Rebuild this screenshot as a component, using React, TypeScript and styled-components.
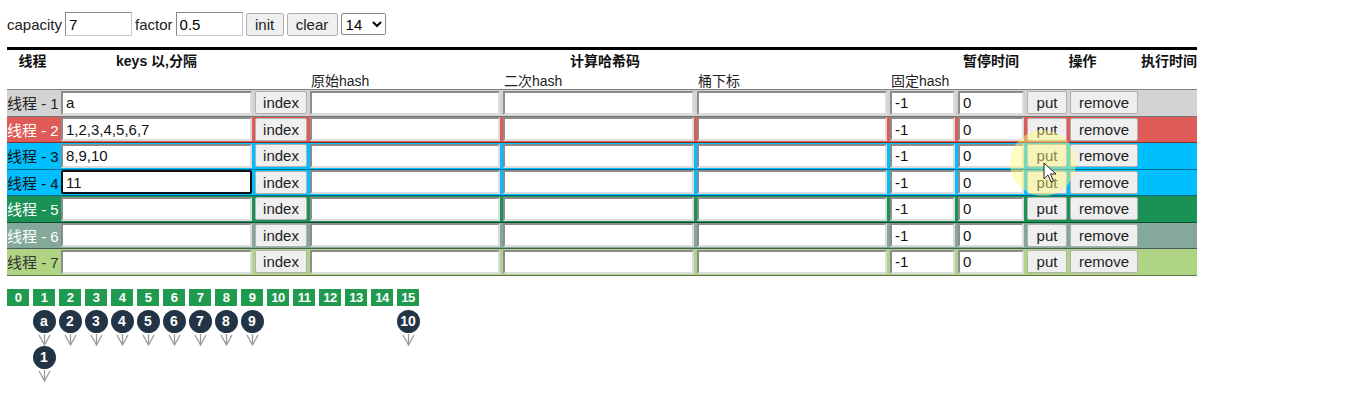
import React from "react"
import styled, { createGlobalStyle } from 'styled-components';

const GlobalStyle = createGlobalStyle`
  body {
    margin: 0;
    background: #fff;
    font-family: "Liberation Sans", Arial, "Noto Sans CJK SC", sans-serif;
    color: #111;
  }
`;

const threads = [
  { n: 1, color: '#d3d3d3', fg: '#222', keys: 'a' },
  { n: 2, color: '#de5b57', fg: '#fff', keys: '1,2,3,4,5,6,7' },
  { n: 3, color: '#00bfff', fg: '#111', keys: '8,9,10' },
  { n: 4, color: '#00bfff', fg: '#111', keys: '11', focused: true },
  { n: 5, color: '#1b9255', fg: '#fff', keys: '' },
  { n: 6, color: '#84a99b', fg: '#fff', keys: '' },
  { n: 7, color: '#afd584', fg: '#333', keys: '' },
];

const chains: Record<number, string[]> = {
  1: ['a', '1'], 2: ['2'], 3: ['3'], 4: ['4'], 5: ['5'],
  6: ['6'], 7: ['7'], 8: ['8'], 9: ['9'], 15: ['10'],
};

export default function App() {
  return (
    <Page>
      <GlobalStyle />
      <Toolbar>
        <span>capacity</span>
        <TextInput defaultValue="7" $w={67} />
        <span>factor</span>
        <TextInput defaultValue="0.5" $w={67} />
        <Button $w={38}>init</Button>
        <Button $w={51}>clear</Button>
        <Select defaultValue="14">
          <option>14</option>
        </Select>
      </Toolbar>

      <Table>
        <HeadRow>
          <HeadCell>线程</HeadCell>
          <HeadCell>keys 以,分隔</HeadCell>
          <HeadCell $span="3 / 8">计算哈希码</HeadCell>
          <HeadCell>暂停时间</HeadCell>
          <HeadCell $span="9 / 11">操作</HeadCell>
          <HeadCell>执行时间</HeadCell>
        </HeadRow>
        <SubHeadRow>
          <SubHead $col={4}>原始hash</SubHead>
          <SubHead $col={5}>二次hash</SubHead>
          <SubHead $col={6}>桶下标</SubHead>
          <SubHead $col={7}>固定hash</SubHead>
        </SubHeadRow>
        <Body>
          {threads.map(t => (
            <Row key={t.n} $bg={t.color}>
              <Label $fg={t.fg}>线程 - {t.n}</Label>
              <CellInput defaultValue={t.keys} $focused={t.focused} />
              <Button>index</Button>
              <CellInput readOnly />
              <CellInput readOnly />
              <CellInput readOnly />
              <CellInput defaultValue="-1" />
              <CellInput defaultValue="0" />
              <Button>put</Button>
              <Button>remove</Button>
              <span />
            </Row>
          ))}
        </Body>
      </Table>

      <Buckets>
        {Array.from({ length: 16 }, (_, i) => (
          <BucketColumn key={i}>
            <BucketBox>{i}</BucketBox>
            {(chains[i] || []).map((v, j) => (
              <Node key={j}>
                <Circle>{v}</Circle>
                <svg width="13" height="12" viewBox="0 0 13 12">
                  <path d="M1 1 L6.5 11 L12 1 M6.5 0 L6.5 11" fill="none" stroke="#9a9a9a" strokeWidth="1.3" />
                </svg>
              </Node>
            ))}
          </BucketColumn>
        ))}
      </Buckets>

      <Highlight />
      <Cursor width="14" height="22" viewBox="0 0 14 22">
        <path d="M1 1 L1 17 L5 13 L8 20 L10.5 19 L7.5 12 L13 12 Z" fill="#fff" stroke="#222" strokeWidth="1" />
      </Cursor>
    </Page>
  );
}

const Page = styled.div`
  position: relative;
  padding: 12px 7px;
  width: 1190px;
  font-size: 15px;
`;

const Toolbar = styled.div`
  display: flex;
  align-items: center;
  gap: 3px;
  height: 24px;
  font-size: 15px;
  color: #222;
`;

const TextInput = styled.input<{ $w: number }>`
  box-sizing: border-box;
  width: ${p => p.$w}px;
  height: 24px;
  padding: 0 3px;
  font: inherit;
  border-width: 1px;
  border-style: solid;
  border-color: #8a8a8a #c8c8c8 #c8c8c8 #8a8a8a;
  background: #fff;
  outline: none;
`;

const Button = styled.button<{ $w?: number }>`
  box-sizing: border-box;
  ${p => p.$w ? `width: ${p.$w}px;` : 'width: 100%;'}
  height: 23px;
  padding: 0;
  font-family: inherit;
  font-size: 15px;
  color: #222;
  background: #efefef;
  border: 1px solid #b0b0b0;
  border-radius: 2px;
`;

const Select = styled.select`
  box-sizing: border-box;
  width: 45px;
  height: 22px;
  font-family: inherit;
  font-size: 15px;
  border: 1px solid #8a8a8a;
  border-radius: 2px;
  background: #fff;
`;

const Table = styled.div`
  margin-top: 11px;
  border-top: 3px solid #000;
`;

const columns = `
  display: grid;
  grid-template-columns: 51px 191px 52px 190px 191px 190px 65px 66px 40px 68px 56px;
  column-gap: 3px;
`;

const HeadRow = styled.div`
  ${columns}
  height: 20px;
  align-items: center;
`;

const HeadCell = styled.div<{ $span?: string }>`
  ${p => p.$span ? `grid-column: ${p.$span};` : ''}
  text-align: center;
  font-weight: bold;
  font-size: 14px;
  white-space: nowrap;
`;

const SubHeadRow = styled.div`
  ${columns}
  height: 19px;
  align-items: center;
`;

const SubHead = styled.div<{ $col: number }>`
  grid-column: ${p => p.$col};
  grid-row: 1;
  font-size: 14px;
  color: #222;
  padding-left: 1px;
  white-space: nowrap;
`;

const Body = styled.div`
  border-top: 1px solid #808080;
`;

const Row = styled.div<{ $bg: string }>`
  ${columns}
  box-sizing: border-box;
  height: 26.5px;
  align-items: center;
  background: ${p => p.$bg};
  border-bottom: 1px solid rgba(0, 0, 0, 0.45);
`;

const Label = styled.div<{ $fg: string }>`
  color: ${p => p.$fg};
  font-size: 15px;
  white-space: nowrap;
`;

const CellInput = styled.input<{ $focused?: boolean }>`
  box-sizing: border-box;
  width: 100%;
  height: 24px;
  padding: 0 3px;
  font-family: inherit;
  font-size: 15px;
  color: #111;
  background: #fff;
  outline: none;
  border-radius: ${p => p.$focused ? '2px' : '0'};
  border-width: 2px;
  border-style: solid;
  border-color: ${p => p.$focused ? '#111' : '#8c8c8c #dcdcdc #dcdcdc #8c8c8c'};
`;

const Buckets = styled.div`
  display: flex;
  gap: 4px;
  margin-top: 13px;
`;

const BucketColumn = styled.div`
  display: flex;
  flex-direction: column;
  align-items: center;
  width: 22px;
`;

const BucketBox = styled.div`
  width: 22px;
  height: 17px;
  line-height: 17px;
  text-align: center;
  background: #1f9a4f;
  color: #fff;
  font-weight: bold;
  font-size: 13px;
  letter-spacing: -0.5px;
  margin-bottom: 4px;
`;

const Node = styled.div`
  display: flex;
  flex-direction: column;
  align-items: center;
  gap: 1px;
`;

const Circle = styled.div`
  width: 23px;
  height: 23px;
  border-radius: 50%;
  background: #243447;
  color: #fff;
  font-weight: bold;
  font-size: 14px;
  line-height: 23px;
  text-align: center;
  flex-shrink: 0;
`;

const Highlight = styled.div`
  position: absolute;
  left: 1010px;
  top: 130px;
  width: 66px;
  height: 66px;
  border-radius: 50%;
  background: rgba(255, 250, 120, 0.45);
  pointer-events: none;
`;

const Cursor = styled.svg`
  position: absolute;
  left: 1043px;
  top: 162px;
  pointer-events: none;
`;
